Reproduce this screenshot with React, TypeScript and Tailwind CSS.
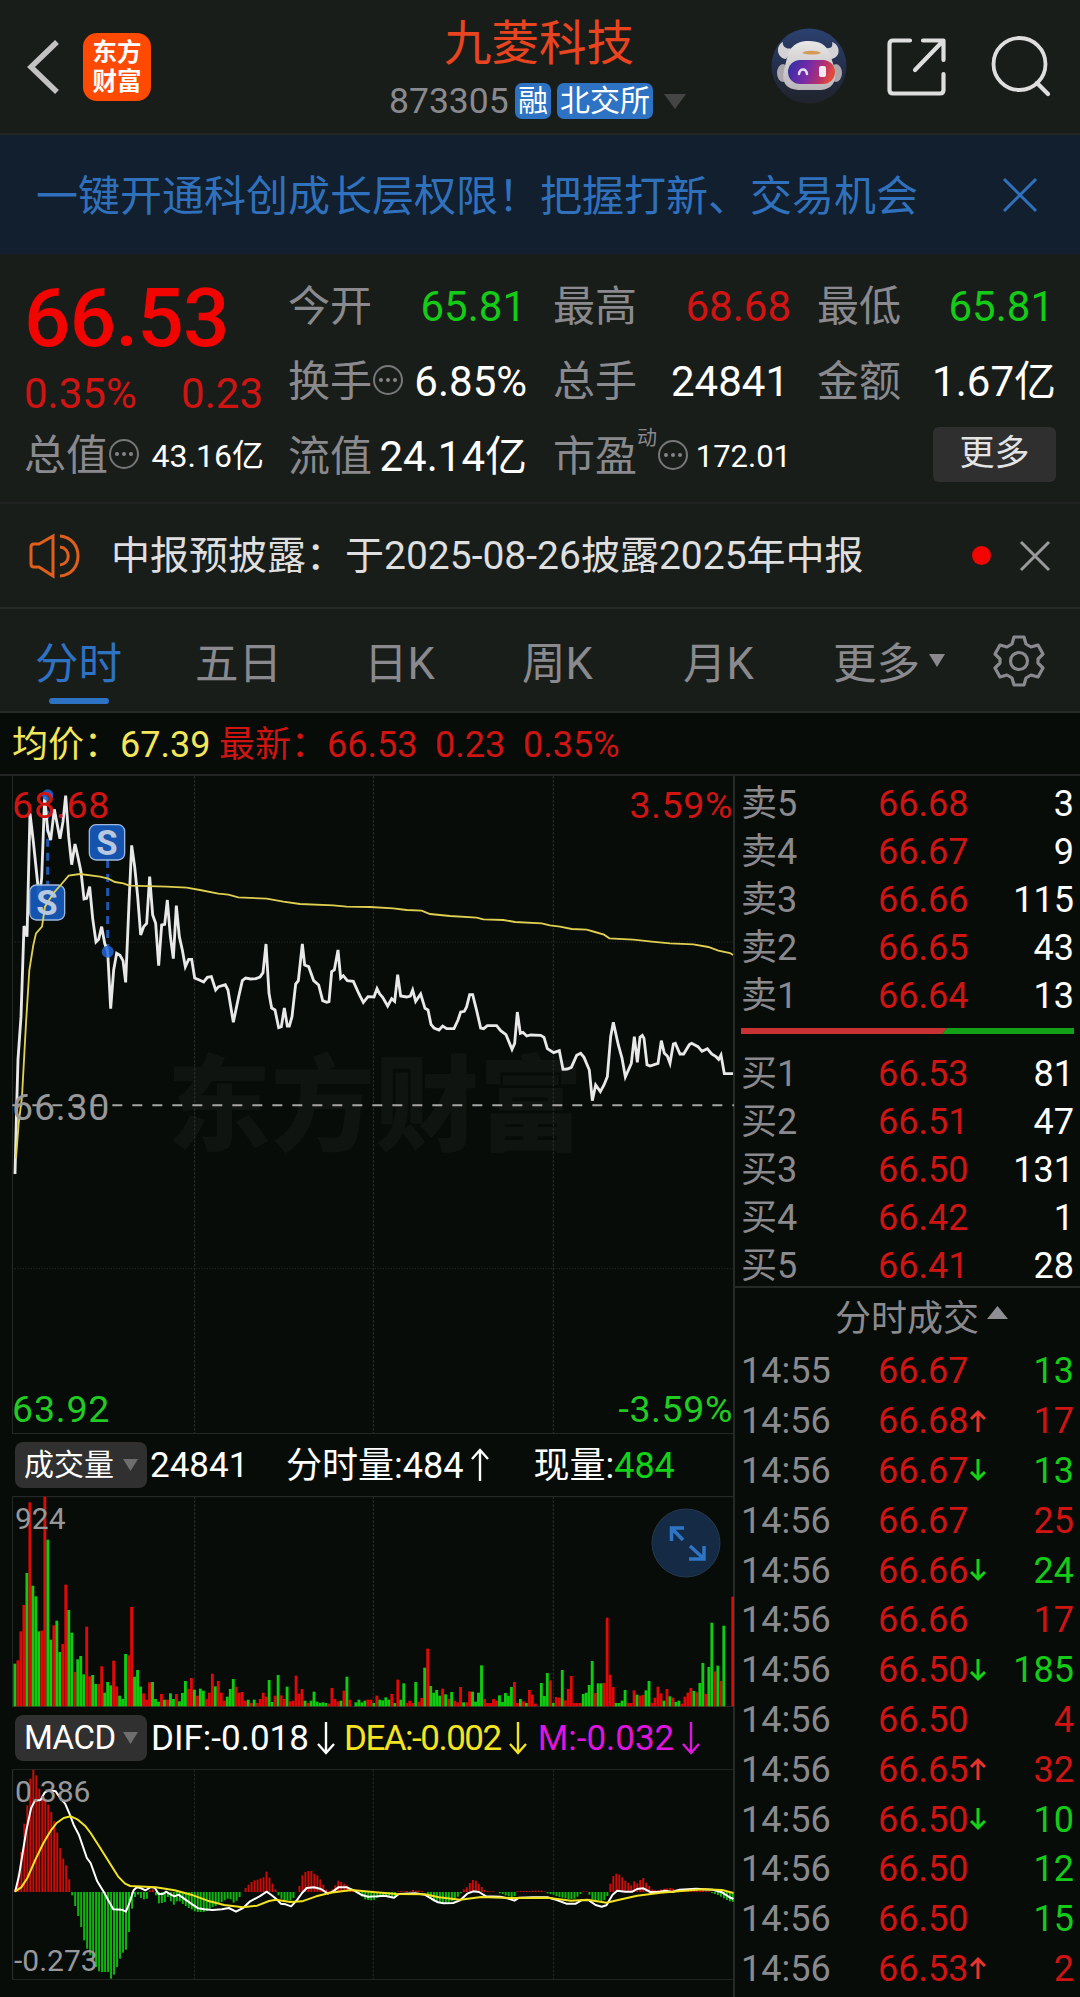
import React from "react";

// minute volumes, 240 minutes + close. Positive = red bar, negative = green bar
const volumes = [
  -128, 138, 225, 304, -400, 612, -362, -330, -225, 227, 629, -500, -200, 243, -257, -163, 187, 365, -289, -221,
  103, -141, -151, -96, 239, 90, -94, -67, 67, 120, -41, -73, -63, 137, 60, -32, -22, -157, 153, 298,
  -89, -109, -59, 39, 20, 72, -73, -22, -14, 37, -20, 20, -39, -22, 37, -15, -40, -76, 52, 85,
  -50, 32, -53, -47, 22, 41, 98, -60, 76, 41, 17, -29, -52, -82, 59, 41, 43, 17, -20, 10,
  -20, 10, 22, 41, 29, -79, -13, 32, -94, 33, 22, -59, 15, 17, 92, 38, 52, -17, 10, -17,
  -44, -14, -10, -12, -10, 8, 55, 22, 15, -17, 47, -89, 20, 0, -12, -20, -12, -17, 20,
  20, -10, 32, -20, -18, -27, -20, 37, -10, 80, -20, -69, 10, 17, 10, -73, 14, 25, -116, 173,
  -61, -41, -49, -32, 53, -36, 22, -43, 17, 12, 58, -12, 12, 45, -44, -14, -41, -123, 22, 10,
  10, 22, 17, -33, -13, -40, -32, -58, 73, 10, -22, 15, -10, 49, 35, 8, 0, -70, -31, -100,
  78, -10, 28, 26, -109, 18, 52, 91, 10, 10, 10, -37, -41, -64, -136, 40, -69, -69, 70, 266,
  95, 58, -10, -10, -17, -49, 10, 10, 48, -35, 32, 34, -48, -76, 10, 26, 59, 39, -17, 52,
  -30, 26, -13, -17, 8, 29, 41, 55, -46, 42, -70, -130, 37, -118, -251, 105, -122, 76, -242, 0,
  0, 329,
];

const macdBars = [
  8, 55, 120, 205, 260, 340, 367, 350, 310, 290, 275, 262, 240, 212, 178, 132, 100, 80, 38, -10,
  -42, -72, -105, -145, -170, -190, -205, -225, -238, -240, -240, -240, -260, -248, -225, -200, -182, -173, -120, -50,
  -15, -8, -18, -22, -20, 5, 8, -10, -34, -33, -30, -15, -28, -38, -28, -28, -36, -42, -48, -52,
  -58, -60, -60, -60, -57, -50, -45, -42, -36, -30, -25, -20, -22, -32, -26, -15, 0, 12, 22, 30,
  35, 37, 41, 44, 61, 43, 25, 8, -10, -20, -24, -25, -26, -18, 0, 18, 50, 60, 63, 63,
  55, 50, 38, 22, 8, 3, 8, 20, 34, 30, 25, 20, 12, 6, 0, -5, -14, -22, -24, -25,
  -24, -18, -14, -12, -13, -14, -15, -12, 2, 3, 2, 3, 2, 6, 4, 4, 3, 0, -10, -18,
  -28, -30, -33, -33, -33, -32, -28, -22, -14, -4, 8, 14, 27, 36, 34, 25, 15, 6, 3, 2,
  2, 0, -4, -6, -10, -13, -15, -12, 2, 3, 3, 3, 3, 4, 4, 4, 4, 2, -4, -6,
  -8, -12, -15, -17, -19, -21, -21, -20, -14, -6, 2, 2, -8, -22, -26, -26, -28, -24, -12, 25,
  48, 55, 52, 44, 34, 28, 20, 32, 26, 36, 42, 28, 18, 8, 6, 6, 8, 10, 11, 12,
  10, 8, 6, 6, 8, 9, 10, 10, 8, 7, 6, 4, 2, -3, -6, -9, -14, -19, -24, -28, -30,
];

const pricePoints =
  "45,1212 50,1010 54,868 63,740 72,468 81,500 90,130 100,215 112,330 117,385 125,325 134,80 143,180 152,210 163,118 172,165 180,206 189,155 197,77 206,200 215,284 225,222 234,262 243,305 252,387 260,385 269,350 278,445 288,516 296,508 305,470 314,520 323,545 332,716 341,600 350,550 360,556 369,572 377,637 387,400 395,226 404,290 413,380 422,495 431,470 440,460 449,320 458,435 467,460 476,587 485,465 494,463 502,390 511,498 520,566 529,407 538,500 547,540 556,590 566,568 575,568 584,624 598,630 611,636 622,622 634,620 647,660 656,650 676,644 684,660 700,757 716,680 727,632 737,624 752,627 768,626 780,621 789,608 798,522 807,670 815,714 825,720 836,773 844,770 853,714 862,768 868,768 876,740 887,642 895,632 907,522 914,585 926,590 941,632 956,645 968,692 980,697 987,695 995,605 1003,600 1014,540 1022,624 1030,617 1042,632 1060,634 1077,672 1090,697 1104,680 1122,681 1131,656 1139,672 1148,682 1163,708 1175,686 1184,694 1193,614 1202,678 1220,681 1231,678 1238,660 1247,694 1262,672 1275,715 1284,720 1293,763 1302,774 1317,780 1328,768 1340,776 1362,776 1374,750 1382,726 1393,724 1400,710 1409,674 1418,674 1430,722 1442,774 1451,776 1462,767 1490,767 1502,782 1518,794 1536,838 1544,820 1552,726 1561,790 1569,787 1580,798 1592,795 1622,796 1632,802 1642,836 1661,848 1678,842 1689,898 1702,897 1714,892 1730,856 1742,850 1752,862 1768,900 1777,992 1787,945 1801,965 1812,945 1822,920 1832,800 1840,757 1855,825 1866,864 1876,921 1894,880 1903,800 1912,877 1920,802 1927,796 1932,805 1941,884 1950,888 1974,880 1984,812 1993,850 2002,858 2010,880 2020,822 2026,820 2040,852 2051,852 2068,824 2075,820 2094,830 2106,844 2122,836 2135,852 2148,860 2156,868 2163,855 2173,911 2199,911";

const averagePoints =
  "48,1165 56,1060 66,980 72,870 78,760 88,600 100,525 108,490 126,470 135,410 160,370 182,345 206,317 240,312 300,320 325,326 345,336 370,340 388,347 500,350 560,353 600,360 655,371 685,374 715,382 800,386 850,395 900,402 1000,406 1040,410 1110,411 1180,415 1220,420 1265,422 1290,432 1350,438 1430,443 1450,448 1510,450 1545,456 1625,460 1650,466 1680,470 1715,477 1760,479 1785,486 1812,494 1828,505 1900,509 1955,515 2010,520 2080,523 2125,531 2155,542 2190,549 2199,555";

const difPoints =
  "32,577 40,530 48,460 56,390 66,325 74,303 86,301 95,278 104,272 118,275 130,300 138,312 148,345 156,375 167,405 184,475 192,490 206,545 220,577 228,598 240,629 258,630 267,636 274,610 283,572 290,563 298,565 308,572 320,562 328,564 336,583 345,583 352,576 362,585 370,590 378,585 390,597 405,612 420,626 433,629 450,631 470,629 485,625 500,636 515,625 530,605 550,590 565,576 575,586 585,597 595,612 605,614 617,620 630,600 640,580 650,565 665,563 680,568 695,582 705,576 717,563 735,563 750,572 765,585 780,591 800,590 815,588 835,594 845,583 880,581 900,585 915,598 928,608 940,611 960,610 975,602 990,582 1003,575 1015,577 1030,590 1060,591 1075,596 1090,603 1100,594 1130,593 1160,593 1180,601 1200,612 1220,612 1232,602 1248,602 1262,616 1275,621 1285,617 1298,585 1308,573 1325,576 1340,576 1350,568 1363,566 1378,577 1395,577 1410,573 1425,577 1440,570 1475,567 1510,570 1530,578 1545,592 1554,598";

const deaPoints =
  "32,575 45,563 58,535 75,480 92,430 108,392 120,370 135,355 150,350 165,360 180,378 192,400 210,440 230,485 250,530 265,552 276,559 330,563 370,572 405,585 440,603 475,616 515,623 545,618 570,604 585,600 615,607 640,605 670,590 700,579 745,571 790,577 840,583 900,584 930,593 975,600 1020,592 1080,595 1160,594 1210,603 1245,600 1285,609 1310,601 1350,588 1400,579 1450,573 1490,569 1530,571 1554,580";

const sells = [
  ["卖5", "66.68", "3"],
  ["卖4", "66.67", "9"],
  ["卖3", "66.66", "115"],
  ["卖2", "66.65", "43"],
  ["卖1", "66.64", "13"],
];

const buys = [
  ["买1", "66.53", "81"],
  ["买2", "66.51", "47"],
  ["买3", "66.50", "131"],
  ["买4", "66.42", "1"],
  ["买5", "66.41", "28"],
];

const trades = [
  { time: "14:55", price: "66.67", arrow: "", qty: "13", up: false },
  { time: "14:56", price: "66.68", arrow: "up", qty: "17", up: true },
  { time: "14:56", price: "66.67", arrow: "down", qty: "13", up: false },
  { time: "14:56", price: "66.67", arrow: "", qty: "25", up: true },
  { time: "14:56", price: "66.66", arrow: "down", qty: "24", up: false },
  { time: "14:56", price: "66.66", arrow: "", qty: "17", up: true },
  { time: "14:56", price: "66.50", arrow: "down", qty: "185", up: false },
  { time: "14:56", price: "66.50", arrow: "", qty: "4", up: true },
  { time: "14:56", price: "66.65", arrow: "up", qty: "32", up: true },
  { time: "14:56", price: "66.50", arrow: "down", qty: "10", up: false },
  { time: "14:56", price: "66.50", arrow: "", qty: "12", up: false },
  { time: "14:56", price: "66.50", arrow: "", qty: "15", up: false },
  { time: "14:56", price: "66.53", arrow: "up", qty: "2", up: true },
];

const InfoDot = () => (
  <svg width="32" height="32" viewBox="0 0 32 32" className="mb-1 shrink-0">
    <circle cx="16" cy="16" r="14" fill="none" stroke="#77777a" strokeWidth="2" />
    <circle cx="9" cy="16" r="2" fill="#858588" />
    <circle cx="16" cy="16" r="2" fill="#858588" />
    <circle cx="23" cy="16" r="2" fill="#858588" />
  </svg>
);

const Arrow = ({ dir }: { dir: string }) => (
  <svg width="16" height="24" viewBox="0 0 16 24" className="mb-0.5 shrink-0">
    <path
      d={dir === "up" ? "M8 23V3M1 10L8 3L15 10" : "M8 1V21M1 14L8 21L15 14"}
      fill="none"
      stroke={dir === "up" ? "#e8342c" : "#12d318"}
      strokeWidth="3"
    />
  </svg>
);

const LongArrow = ({ color, up }: { color: string; up?: boolean }) => (
  <svg width="18" height="34" viewBox="0 0 18 34" className="shrink-0">
    <path
      d={up ? "M9 33V2M1 11L9 2L17 11" : "M9 1V32M1 23L9 32L17 23"}
      fill="none"
      stroke={color}
      strokeWidth="2.4"
    />
  </svg>
);

const Robot = () => (
  <svg width="76" height="76" viewBox="0 0 76 76">
    <defs>
      <linearGradient id="sky" x1="0" y1="0" x2="0" y2="1">
        <stop offset="0" stopColor="#2b4170" />
        <stop offset="0.6" stopColor="#232c45" />
        <stop offset="1" stopColor="#20232b" />
      </linearGradient>
      <linearGradient id="visor" x1="0" y1="0" x2="1" y2="0.2">
        <stop offset="0" stopColor="#2b2fa6" />
        <stop offset="0.5" stopColor="#7a2ba5" />
        <stop offset="0.8" stopColor="#b8306c" />
        <stop offset="1" stopColor="#df4a3d" />
      </linearGradient>
      <linearGradient id="shell" x1="0" y1="0" x2="0" y2="1">
        <stop offset="0" stopColor="#e8e6e6" />
        <stop offset="1" stopColor="#b9b5b9" />
      </linearGradient>
    </defs>
    <circle cx="38" cy="38" r="37.5" fill="url(#sky)" />
    <path d="M12 14C4 18 6 30 15 31L22 20C15 22 11 18 12 14Z" fill="#d5d2d6" />
    <path d="M61 14C70 17 70 30 60 31L54 20C61 21 62 18 61 14Z" fill="#d5d2d6" />
    <ellipse cx="12" cy="45" rx="6" ry="9" fill="#a9a6ac" />
    <ellipse cx="65" cy="45" rx="6" ry="9" fill="#a9a6ac" />
    <path d="M17 26C22 15 29 13 38 13C48 13 55 16 59 26L64 42C66 55 60 61 50 62H27C15 61 10 54 13 42Z" fill="url(#shell)" />
    <path d="M31 25C34 22 47 22 50 25C46 27 36 27 31 25Z" fill="#d69a58" />
    <rect x="17" y="32" width="47" height="24" rx="12" fill="url(#visor)" />
    <path d="M28 46C29 40 35 40 36 46" fill="none" stroke="#e5dcf5" strokeWidth="2.5" strokeLinecap="round" />
    <rect x="48" y="38" width="7" height="11" rx="2" fill="#f6e8ef" />
  </svg>
);

const Header = () => (
  <div className="flex h-[135px] items-start border-b-2 border-[#232625]">
    <svg width="36" height="60" viewBox="0 0 36 60" className="mt-[37px] ml-[26px]">
      <path d="M31 5L5 30L31 55" fill="none" stroke="#c2c2c2" strokeWidth="5.5" />
    </svg>
    <div className="mt-[33px] ml-[21px] flex h-[68px] w-[68px] flex-col items-center justify-center rounded-[14px] bg-[#ff4a03] text-[24.500px] leading-[29px] font-bold text-white">
      <span className="h-[29px]">东方</span>
      <span className="h-[29px]">财富</span>
    </div>
    <div className="mt-[16px] ml-[239px] flex w-[300px] flex-col">
      <div className="ml-[54px] h-[56px] text-[47.5px] leading-[56px] text-[#e8441f]">九菱科技</div>
      <div className="mt-[8px] flex h-[42px] items-center">
        <span className="-ml-px w-[126px] text-[35.5px] leading-[42px] text-[#8a8a8e]">873305</span>
        <span className="h-9 w-9 rounded-[7px] bg-[#2e72c4] text-center text-[30px] leading-[35px] text-white">融</span>
        <span className="ml-1.5 h-9 w-24 rounded-[7px] bg-[#2e72c4] text-center text-[30px] leading-[35px] text-white">北交所</span>
        <svg width="22" height="15" viewBox="0 0 22 15" className="ml-[11px]">
          <path d="M0 0H22L11 15Z" fill="#454545" />
        </svg>
      </div>
    </div>
    <div className="mt-[28px] ml-[81px]">
      <Robot />
    </div>
    <svg width="62" height="62" viewBox="0 0 62 62" className="mt-[36px] ml-[39px]">
      <path d="M24 4.500H7Q3.500 4.500 3.500 8V54Q3.500 57.500 7 57.500H54Q57.500 57.500 57.500 54V38" fill="none" stroke="#dedede" strokeWidth="4.200" strokeLinecap="round" />
      <path d="M37 4.500H57.500V24M56 6L29 34" fill="none" stroke="#dedede" strokeWidth="4.200" strokeLinecap="round" strokeLinejoin="round" />
    </svg>
    <svg width="62" height="62" viewBox="0 0 62 62" className="mt-[36px] ml-[43px]">
      <circle cx="28.500" cy="28" r="26" fill="none" stroke="#dedede" strokeWidth="3.800" />
      <path d="M46 47L57 58" stroke="#dedede" strokeWidth="4.200" strokeLinecap="round" />
    </svg>
  </div>
);

const Quote = () => (
  <div className="flex h-[250px] border-b-2 border-[#1f2221] pl-[24px] text-[42px]">
    <div className="flex w-[240px] flex-col pt-[22px]">
      <div className="h-[84px] text-[82px] leading-[84px] font-medium tracking-[-0.9px] text-[#f20400]">66.53</div>
      <div className="mt-[9px] flex h-[50px] justify-between pr-px leading-[50px] text-[#cf1412]">
        <span>0.35%</span>
        <span>0.23</span>
      </div>
      <div className="mt-[12px] flex h-[50px] items-center leading-[50px]">
        <span className="text-[#8a8a8e]">总值</span>
        <InfoDot />
        <span className="ml-auto text-[32px] text-white">43.16亿</span>
      </div>
    </div>
    <div className="ml-6 grid w-[767px] grid-cols-[239px_238px_239px] content-start gap-x-[26px] gap-y-[25px] pt-[28px] leading-[50px]">
      <div className="flex h-[50px] justify-between">
        <span className="text-[#8a8a8e]">今开</span>
        <span className="pr-px text-[#14cb18]">65.81</span>
      </div>
      <div className="flex h-[50px] justify-between">
        <span className="text-[#8a8a8e]">最高</span>
        <span className="text-[#cf1412]">68.68</span>
      </div>
      <div className="flex h-[50px] justify-between">
        <span className="text-[#8a8a8e]">最低</span>
        <span className="pr-0.5 text-[#14cb18]">65.81</span>
      </div>
      <div className="flex h-[50px] items-center">
        <span className="text-[#8a8a8e]">换手</span>
        <InfoDot />
        <span className="ml-auto text-white">6.85%</span>
      </div>
      <div className="flex h-[50px] justify-between">
        <span className="text-[#8a8a8e]">总手</span>
        <span className="pr-0.5 text-white">24841</span>
      </div>
      <div className="flex h-[50px] justify-between">
        <span className="text-[#8a8a8e]">金额</span>
        <span className="text-white">1.67亿</span>
      </div>
      <div className="flex h-[50px] justify-between">
        <span className="text-[#8a8a8e]">流值</span>
        <span className="text-white">24.14亿</span>
      </div>
      <div className="flex h-[50px] items-center">
        <span className="text-[#8a8a8e]">市盈</span>
        <span className="mb-[38px] h-5 text-[20px] leading-5 text-[#8a8a8e]">动</span>
        <InfoDot />
        <span className="ml-auto text-[31px] text-white">172.01</span>
      </div>
      <div className="ml-auto h-[55px] w-[123px] -translate-y-[5px] rounded-md bg-[#2f2f30] text-center text-[35px] leading-[53px] text-[#e4e4e4]">
        更多
      </div>
    </div>
  </div>
);

const Notice = () => (
  <div className="flex h-[105px] items-center border-b-2 border-[#262928] pr-[29px] pl-[29px]">
    <svg width="54" height="46" viewBox="0 0 54 46">
      <path d="M24 3L10 11H5Q2 11 2 14V31Q2 34 5 34H10L24 43Z" fill="none" stroke="#e0601b" strokeWidth="3" />
      <path d="M31 3C55 5 55 41 31 43M31 14C42 15 42 31 31 32" fill="none" stroke="#e0601b" strokeWidth="3" />
    </svg>
    <span className="ml-[28px] text-[39px] leading-[50px] text-[#dfdfdf]">中报预披露：于2025-08-26披露2025年中报</span>
    <span className="ml-auto h-[19px] w-[19px] rounded-full bg-[#f20400]" />
    <svg width="32" height="32" viewBox="0 0 32 32" className="ml-[28px]">
      <path d="M2 2L30 30M30 2L2 30" stroke="#9a9a9d" strokeWidth="3" />
    </svg>
  </div>
);

const Tabs = () => (
  <div className="flex h-[104px] border-b-2 border-[#262928] pl-[35px] text-[43.500px] leading-[112px] text-[#8a8a8e]">
    <div className="flex w-[160px] flex-col">
      <span className="h-[89px] text-[#2e72c4]">分时</span>
      <span className="ml-3.5 h-1.5 w-[60px] rounded-sm bg-[#2e72c4]" />
    </div>
    <span className="w-[169px]">五日</span>
    <span className="w-[158px]">日K</span>
    <span className="w-[161px]">周K</span>
    <span className="w-[150px]">月K</span>
    <span className="w-[95px]">更多</span>
    <svg width="18" height="13" viewBox="0 0 18 13" className="mt-[45px]">
      <path d="M1 0H17L9 13Z" fill="#8a8a8e" />
    </svg>
    <svg width="54" height="54" viewBox="0 0 54 54" className="mt-[25px] ml-[46px]">
      <path
        d="M22 3H32L34 10L39 13L46 11L51 20L46 25V29L51 34L46 43L39 41L34 44L32 51H22L20 44L15 41L8 43L3 34L8 29V25L3 20L8 11L15 13L20 10Z"
        fill="none"
        stroke="#8a8a8e"
        strokeWidth="3.200"
        strokeLinejoin="round"
      />
      <circle cx="27" cy="27" r="8.500" fill="none" stroke="#8a8a8e" strokeWidth="3.200" />
    </svg>
  </div>
);

const PriceChart = () => (
  <div className="relative h-[658px]">
    <span className="absolute top-[267px] left-[155px] text-[104px] leading-[130px] font-black text-[#101411]">东方财富</span>
    <svg width="722" height="658" viewBox="36 18 2166 1974" className="absolute top-0 left-0">
      <g stroke="#2b2f2c" strokeWidth="3" fill="none">
        <path d="M37 18V1991H2202" />
        <path d="M584 18V1991M1120 18V1991M1660 18V1991" strokeDasharray="8 4" />
        <path d="M37 516H2202M37 1496H2202" strokeDasharray="3 5" />
      </g>
      <path d="M37 1006H2202" stroke="#a5a5a5" strokeWidth="6" strokeDasharray="30 30" />
      <g stroke="#1f63c4" strokeWidth="9" strokeDasharray="24 18" opacity="0.9">
        <path d="M143 80V345M323 270V545" />
      </g>
      <polyline points={pricePoints} fill="none" stroke="#e9e9e9" strokeWidth="8.500" />
      <circle cx="143" cy="75" r="17" fill="#1f66d6" opacity="0.85" />
      <circle cx="323" cy="545" r="18" fill="#1f66d6" opacity="0.85" />
      <g fill="#1559b8" fillOpacity="0.95" stroke="#9cb8dc" strokeWidth="4">
        <rect x="89" y="345" width="105" height="105" rx="20" />
        <rect x="268" y="164" width="106" height="106" rx="20" />
      </g>
      <polyline points={averagePoints} fill="none" stroke="#dfd052" strokeWidth="5.500" />
      <g fill="#b9c8de" fontSize="104" fontWeight="700" textAnchor="middle">
        <text x="141" y="435">S</text>
        <text x="321" y="254">S</text>
      </g>
    </svg>
    <span className="absolute top-[8px] left-0 text-[37.500px] leading-[42px] tracking-[0.8px] text-[#cf1412]">68.68</span>
    <span className="absolute top-[8px] right-0 text-[37.500px] leading-[42px] tracking-[0.6px] text-[#cf1412]">3.59%</span>
    <span className="absolute top-[310px] left-0 text-[37.500px] leading-[42px] tracking-[0.8px] text-[#98989a]">66.30</span>
    <span className="absolute top-[612px] left-0 text-[37.500px] leading-[42px] tracking-[0.8px] text-[#22cb22]">63.92</span>
    <span className="absolute top-[612px] right-0 text-[37.500px] leading-[42px] tracking-[0.6px] text-[#22cb22]">-3.59%</span>
  </div>
);

const VolumeChart = () => (
  <div className="relative h-[211px]">
    <svg width="722" height="211" viewBox="36 379 2166 633" className="absolute top-0 left-0">
      <g stroke="#2b2f2c" strokeWidth="3" fill="none">
        <path d="M2202 381H37V1011H2202" />
        <path d="M584 380V1011M1120 380V1011M1660 380V1011" strokeDasharray="8 4" />
      </g>
      {volumes.map((v, i) => (
        <rect
          key={i}
          x={40.5 + i * 8.973}
          y={1010 - Math.abs(v)}
          width="8.600"
          height={Math.abs(v)}
          fill={v > 0 ? "#df0a08" : "#10cc10"}
        />
      ))}
    </svg>
    <span className="absolute top-[5px] left-[3px] text-[30px] leading-[36px] text-[#98989a]">924</span>
    <svg width="70" height="70" viewBox="0 0 70 70" className="absolute top-[12px] left-[639px]">
      <circle cx="35" cy="35" r="34" fill="#142a45" stroke="#26384c" strokeWidth="1" />
      <path d="M33 20H20.500V33M21 20.500L32 32M53 38V51H38M52 50L39 38" fill="none" stroke="#2f75c6" strokeWidth="3.500" />
    </svg>
  </div>
);

const MacdChart = () => (
  <div className="relative h-[211px]">
    <svg width="722" height="211" viewBox="25.4 208 1529.900 633" preserveAspectRatio="none" className="absolute top-0 left-0">
      <g stroke="#2b2f2c" strokeWidth="2.500" fill="none">
        <path d="M1555 210H26.500V839H1555" />
        <path d="M412 210V839M791 210V839M1173 210V839" strokeWidth="2" strokeDasharray="8 4" />
      </g>
      {macdBars.map((v, i) => (
        <rect
          key={i}
          x={30.5 + i * 6.335}
          y={v > 0 ? 577 - v : 577}
          width="4.200"
          height={Math.abs(v)}
          fill={v > 0 ? "#c80d0b" : "#0fb40f"}
        />
      ))}
      <g fill="none" strokeWidth="2" strokeLinejoin="round">
        <polyline points={difPoints} stroke="#ffffff" vectorEffect="non-scaling-stroke" />
        <polyline points={deaPoints} stroke="#f2e321" vectorEffect="non-scaling-stroke" />
      </g>
    </svg>
    <span className="absolute top-[5px] left-[3px] text-[30px] leading-[36px] text-[#98989a]">0.386</span>
    <span className="absolute top-[174px] left-[2px] text-[30px] leading-[36px] text-[#98989a]">-0.273</span>
  </div>
);

const Pill = ({ children }: { children: React.ReactNode }) => (
  <div className="flex h-[46px] w-[132px] shrink-0 items-center justify-between rounded-lg bg-[#303031] pr-[9px] pl-[9px] leading-[46px] text-white">
    {children}
    <svg width="15" height="12" viewBox="0 0 15 12">
      <path d="M0 0H15L7.500 12Z" fill="#6e6e6e" />
    </svg>
  </div>
);

const BookRow = ({ row }: { row: string[] }) => (
  <div className="flex h-12 items-center pr-[6px] pl-1.5 leading-[48px]">
    <span className="w-[137px] text-[#8a8a8e]">{row[0]}</span>
    <span className="text-[#cf1412]">{row[1]}</span>
    <span className="ml-auto text-white">{row[2]}</span>
  </div>
);

const App = () => {
  return (
    <div className="h-[1997px] w-[1080px] overflow-hidden bg-[#191d1a] font-['Roboto','Noto_Sans_CJK_SC',sans-serif] whitespace-nowrap">
      <Header />

      {/* Promo banner */}
      <div className="flex h-[119px] items-center justify-between bg-[#111f2e] pr-[42px] pl-[36px] text-[42px] leading-[60px] text-[#3071bd]">
        <span className="pt-[5px]">一键开通科创成长层权限！把握打新、交易机会</span>
        <svg width="36" height="36" viewBox="0 0 36 36">
          <path d="M2 2L34 34M34 2L2 34" stroke="#3071bd" strokeWidth="3" />
        </svg>
      </div>

      <Quote />
      <Notice />
      <Tabs />

      <div className="bg-[#070c08]">
        {/* Average and last price */}
        <div className="flex h-[63px] items-center border-b-2 border-[#222524] pl-3 text-[36px] leading-[62px]">
          <span className="w-[207px] pt-[3px] text-[#f3e65b]">均价：67.39</span>
          <span className="w-[216px] pt-[3px] text-[#cf1412]">最新：66.53</span>
          <span className="w-[88px] pt-[3px] text-[#cf1412]">0.23</span>
          <span className="pt-[3px] text-[#cf1412]">0.35%</span>
        </div>

        <div className="flex h-[1221px]">
          <div className="w-[735px] border-r-2 border-[#262a27] pl-3">
            <PriceChart />
            <div className="flex h-[62px] items-center pl-[3px] text-[35px] leading-[60px] text-white">
              <Pill>
                <span className="text-[30px]">成交量</span>
              </Pill>
              <span className="ml-[3px] w-[136px] pt-0.5">24841</span>
              <span className="mr-2 pt-0.5 text-[36px]">分时量:484</span>
              <LongArrow color="#ffffff" up />
              <span className="ml-[44px] pt-0.5 text-[36px]">
                现量:<span className="text-[#12d318]">484</span>
              </span>
            </div>
            <VolumeChart />
            <div className="flex h-[62px] items-center pl-[3px] text-[35px] leading-[60px] text-white">
              <Pill>
                <span className="text-[33px] tracking-[-0.5px]">MACD</span>
              </Pill>
              <span className="mr-2 ml-1 pt-0.5">DIF:-0.018</span>
              <LongArrow color="#ffffff" />
              <span className="mr-2 ml-[9px] pt-0.5 tracking-[-1.5px] text-[#f3e321]">DEA:-0.002</span>
              <LongArrow color="#f3e321" />
              <span className="mr-2 ml-[11px] pt-0.5 text-[#df14df]">M:-0.032</span>
              <LongArrow color="#df14df" />
            </div>
            <MacdChart />
          </div>

          {/* Order book */}
          <div className="flex-1 text-[36px]">
            <div className="h-[251px] pt-[4px]">
              {sells.map((row) => (
                <BookRow key={row[0]} row={row} />
              ))}
            </div>
            <svg width="333" height="6" viewBox="0 0 333 6" className="mt-[1px] ml-1.5">
              <path d="M0 0H206L201 6H0Z" fill="#c93234" />
              <path d="M206 0H333V6H201Z" fill="#12a016" />
            </svg>
            <div className="h-[254px] border-b-2 border-[#262a27] pt-[16px]">
              {buys.map((row) => (
                <BookRow key={row[0]} row={row} />
              ))}
            </div>
            <div className="flex h-[59px] items-center pt-0.5 pl-[100px] leading-[58px] text-[#8a8a8e]">
              分时成交
              <svg width="21" height="13" viewBox="0 0 21 13" className="mb-3 ml-2">
                <path d="M10.500 0L21 13H0Z" fill="#8f8f93" />
              </svg>
            </div>
            {trades.map((t, i) => (
              <div key={i} className="flex h-[49.800px] items-center pr-[6px] pl-1.5 leading-[49px]">
                <span className="w-[137px] text-[#8a8a8e]">{t.time}</span>
                <span className="mr-0.5 text-[#cf1412]">{t.price}</span>
                {t.arrow && <Arrow dir={t.arrow} />}
                <span className={t.up ? "ml-auto text-[#cf1412]" : "ml-auto text-[#14cb18]"}>{t.qty}</span>
              </div>
            ))}
          </div>
        </div>
      </div>
    </div>
  );
};

export default App;
